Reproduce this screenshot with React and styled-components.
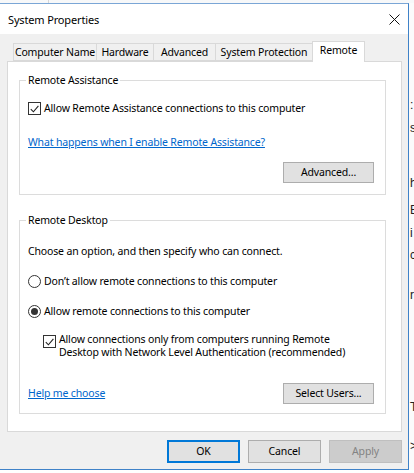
import styled, { createGlobalStyle } from "styled-components";

const GlobalStyle = createGlobalStyle`
  html, body {
    margin: 0;
    padding: 0;
    background: #ffffff;
  }
  body {
    font-family: "Noto Sans", "Liberation Sans", sans-serif;
    font-size: 10.5px;
    letter-spacing: -0.15px;
    color: #000;
  }
`;

const Screen = styled.div`
  width: 414px;
  height: 473px;
  overflow: hidden;
  display: flex;
  flex-direction: column;
  background: #fbfbfb;
`;

const TopStrip = styled.div`
  height: 3px;
  flex: none;
  display: flex;
  background: #f7f8f9;
`;

const TopEdge = styled.div`
  width: 48px;
  border-right: 1px solid #d6d6d6;
`;

const Middle = styled.div`
  display: flex;
  flex: none;
`;

const Window = styled.div`
  width: 408px;
  border-top: 1px solid #7aa6d6;
  border-right: 1px solid #3f82c8;
  border-bottom: 1px solid #3f82c8;
  background: #f0f0f0;
  display: flex;
  flex-direction: column;
`;

const TitleBar = styled.div`
  height: 30px;
  background: #ffffff;
  display: flex;
  align-items: center;
  justify-content: space-between;
  padding: 0 8px 0 8px;
`;

const Title = styled.span`
  font-size: 11px;
  line-height: 15px;
`;

const Body = styled.div`
  padding: 7px 6px 0 7px;
`;

const TabStrip = styled.div`
  display: flex;
  align-items: flex-end;
  height: 21px;
  padding-left: 7px;
  margin-bottom: -1px;
  position: relative;
  z-index: 1;
`;

const Tab = styled.div`
  box-sizing: border-box;
  width: ${(p) => p.$w}px;
  height: ${(p) => (p.$active ? "21px" : "18px")};
  margin-bottom: ${(p) => (p.$active ? "0" : "1px")};
  margin-left: -1px;
  padding-top: ${(p) => (p.$active ? "1px" : "1px")};
  border: 1px solid #d9d9d9;
  border-bottom: ${(p) => (p.$active ? "none" : "1px solid #d9d9d9")};
  background: ${(p) => (p.$active ? "#ffffff" : "#f0f0f0")};
  position: relative;
  z-index: ${(p) => (p.$active ? 2 : 0)};
  line-height: 15px;
  text-align: center;
  white-space: nowrap;
`;

const Panel = styled.div`
  border: 1px solid #d9d9d9;
  background: #ffffff;
  padding: 11px 15px 17px 11px;
  display: flex;
  flex-direction: column;
`;

const Group = styled.fieldset`
  margin: ${(p) => p.$top || 0}px 0 0 0;
  padding: 0 11px ${(p) => p.$bottom}px 8px;
  border: 1px solid #dcdcdc;
  min-width: 0;
`;

const Legend = styled.legend`
  padding: 0 2px;
  margin-left: -2px;
  line-height: 15px;
`;

const Row = styled.div`
  display: flex;
  align-items: ${(p) => p.$align || "center"};
  justify-content: ${(p) => p.$justify || "flex-start"};
  margin-top: ${(p) => p.$top}px;
  padding-left: ${(p) => p.$indent || 0}px;
  line-height: ${(p) => p.$lh || 15}px;
  white-space: nowrap;
`;

const Box = styled.span`
  box-sizing: border-box;
  width: 13px;
  height: 13px;
  flex: none;
  border: 1px solid #333333;
  background: #ffffff;
  margin-right: 3px;
  margin-top: ${(p) => p.$top || 0}px;
  display: flex;
  align-items: center;
  justify-content: center;
`;

const Radio = styled.span`
  box-sizing: border-box;
  width: 13px;
  height: 13px;
  flex: none;
  border-radius: 50%;
  border: 1px solid #333333;
  background: #ffffff;
  margin-right: 3px;
  display: flex;
  align-items: center;
  justify-content: center;

  &::after {
    content: "";
    width: 7px;
    height: 7px;
    border-radius: 50%;
    background: ${(p) => (p.$on ? "#333333" : "transparent")};
  }
`;

const Link = styled.a`
  color: #0066cc;
  text-decoration: underline;
  cursor: pointer;
`;

const Button = styled.button`
  box-sizing: border-box;
  width: ${(p) => p.$w}px;
  height: ${(p) => p.$h}px;
  flex: none;
  padding: 0;
  font-family: inherit;
  font-size: 10.5px;
  letter-spacing: -0.15px;
  line-height: 15px;
  color: ${(p) => (p.$disabled ? "#838383" : "#000000")};
  background: ${(p) => (p.$disabled ? "#cccccc" : "#e1e1e1")};
  border: 1px solid ${(p) => (p.$disabled ? "#bfbfbf" : "#adadad")};
  box-shadow: ${(p) => (p.$default ? "inset 0 0 0 1px #0078d7" : "none")};
  border-color: ${(p) => (p.$default ? "#0078d7" : undefined)};
`;

const Footer = styled.div`
  display: flex;
  justify-content: flex-end;
  gap: 8px;
  padding: 8px 0 6px;
`;

const Backdrop = styled.div`
  flex: 1;
  overflow: hidden;
  font-family: "Liberation Sans", sans-serif;
  font-size: 12px;
  line-height: 14px;
  color: #222;
  display: flex;
  flex-direction: column;
`;

const Fragment = styled.span`
  margin-top: ${(p) => p.$top}px;
  padding-left: 1px;
`;

const BottomStrip = styled.div`
  flex: 1;
  background: #ffffff;
`;

const CheckMark = () => (
  <svg width="9" height="8" viewBox="0 0 9 8">
    <path d="M0.8 4.2 L3.4 6.8 L8.4 0.8" fill="none" stroke="#222" strokeWidth="1.1" />
  </svg>
);

const CloseIcon = () => (
  <svg width="11" height="11" viewBox="0 0 11 11">
    <path d="M0.5 0.5 L10.5 10.5 M10.5 0.5 L0.5 10.5" stroke="#111" strokeWidth="1" />
  </svg>
);

const tabs = [
  { label: "Computer Name", w: 84 },
  { label: "Hardware", w: 58 },
  { label: "Advanced", w: 63 },
  { label: "System Protection", w: 98 },
  { label: "Remote", w: 53, active: true },
];

const fragments = [
  { top: 95, text: ":" },
  { top: 9, text: "s" },
  { top: 41, text: "h" },
  { top: 13, text: "E" },
  { top: 9, text: "i" },
  { top: 8, text: "c" },
  { top: 26, text: "r" },
  { top: 98, text: "T" },
  { top: 25, text: ">" },
];

export default function App() {
  return (
    <>
      <GlobalStyle />
      <Screen>
        <TopStrip>
          <TopEdge />
        </TopStrip>
        <Middle>
          <Window>
            <TitleBar>
              <Title>System Properties</Title>
              <CloseIcon />
            </TitleBar>
            <Body>
              <TabStrip>
                {tabs.map((t) => (
                  <Tab key={t.label} $w={t.w} $active={t.active}>
                    {t.label}
                  </Tab>
                ))}
              </TabStrip>
              <Panel>
                <Group $bottom={11}>
                  <Legend>Remote Assistance</Legend>
                  <Row $top={13}>
                    <Box>
                      <CheckMark />
                    </Box>
                    Allow Remote Assistance connections to this computer
                  </Row>
                  <Row $top={19}>
                    <Link>What happens when I enable Remote Assistance?</Link>
                  </Row>
                  <Row $top={12} $justify="flex-end">
                    <Button $w={91} $h={21}>Advanced...</Button>
                  </Row>
                </Group>
                <Group $top={18} $bottom={9}>
                  <Legend>Remote Desktop</Legend>
                  <Row $top={16}>Choose an option, and then specify who can connect.</Row>
                  <Row $top={15}>
                    <Radio />
                    Don’t allow remote connections to this computer
                  </Row>
                  <Row $top={15}>
                    <Radio $on />
                    Allow remote connections to this computer
                  </Row>
                  <Row $top={14} $indent={15} $align="flex-start" $lh={13}>
                    <Box $top={2}>
                      <CheckMark />
                    </Box>
                    <span>
                      Allow connections only from computers running Remote
                      <br />
                      Desktop with Network Level Authentication (recommended)
                    </span>
                  </Row>
                  <Row $top={24} $justify="space-between">
                    <Link>Help me choose</Link>
                    <Button $w={91} $h={21}>Select Users...</Button>
                  </Row>
                </Group>
              </Panel>
              <Footer>
                <Button $w={73} $h={23} $default>OK</Button>
                <Button $w={73} $h={23}>Cancel</Button>
                <Button $w={73} $h={23} $disabled>Apply</Button>
              </Footer>
            </Body>
          </Window>
          <Backdrop>
            {fragments.map((f, i) => (
              <Fragment key={i} $top={f.top}>
                {f.text}
              </Fragment>
            ))}
          </Backdrop>
        </Middle>
        <BottomStrip />
      </Screen>
    </>
  );
}
